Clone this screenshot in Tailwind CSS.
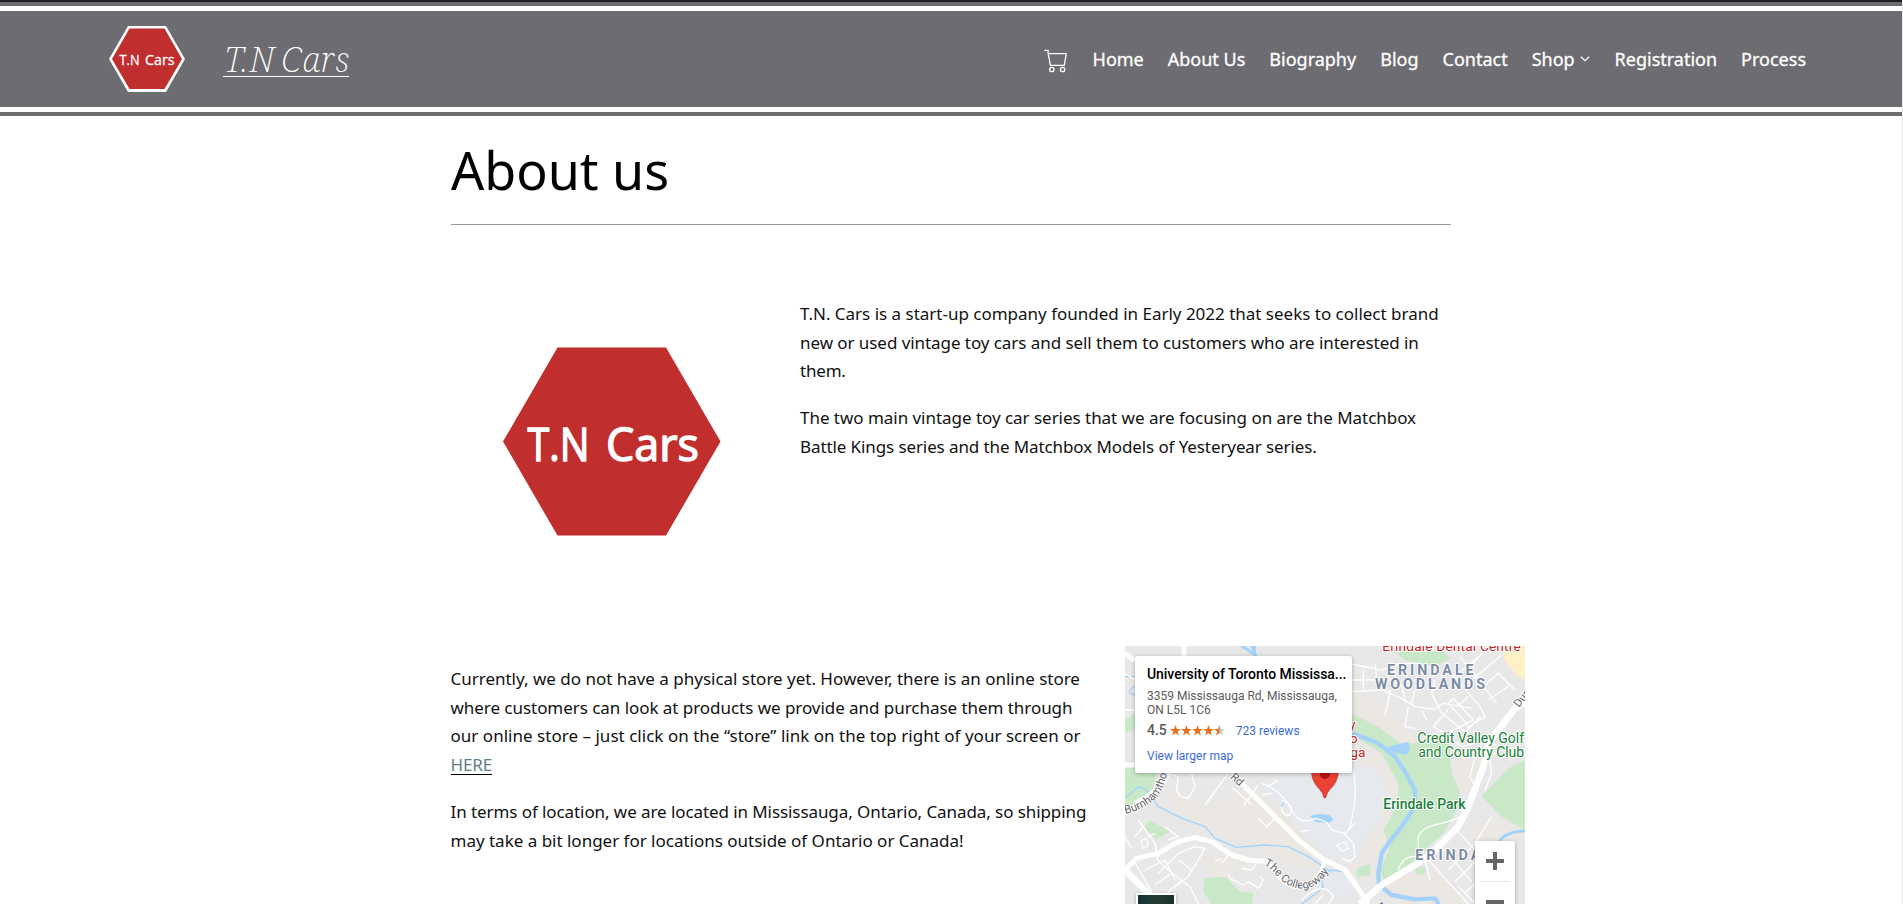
<!DOCTYPE html>
<html lang="en">
<head>
<meta charset="utf-8">
<title>About us – T.N Cars</title>
<script src="https://cdn.jsdelivr.net/npm/@tailwindcss/browser@4"></script>
</head>
<body class="h-[904px] overflow-hidden bg-white text-[#111] font-['Noto_Sans','Open_Sans',sans-serif]">
<div class="h-[904px] w-[1903px] overflow-hidden border-r border-[#e8e8e8]">
  <header class="w-full text-white">
    <div class="h-[2px] bg-[#1d2124]"></div>
    <div class="h-1 bg-[#6d6c70]"></div>
    <div class="h-[5px] bg-white"></div>
    <div class="flex h-24 items-center bg-[#6d6c70] pl-[109px] pr-24">
      <svg class="h-[66px] w-[76px] shrink-0" viewBox="0 0 76 66">
        <polygon points="0,33 19,0 57,0 76,33 57,66 19,66" fill="#fff"/>
        <polygon points="3,33 20.5,2.5 55.5,2.5 73,33 55.5,63 20.5,63" fill="#c12e2e"/>
        <g font-family="Open Sans" font-size="15" fill="#fff" stroke="#fff" stroke-width=".3">
          <text x="10.500" y="39" textLength="20" lengthAdjust="spacingAndGlyphs">T.N</text>
          <text x="36" y="39" textLength="29.500" lengthAdjust="spacingAndGlyphs">Cars</text>
        </g>
      </svg>
      <a class="ml-[38px] mt-[3px] flex h-[33px] w-[126px] items-end border-b border-white">
        <span class="whitespace-nowrap pl-[1px] text-[35px] font-extralight italic leading-[34px] tracking-[0.7px] [word-spacing:-4px] font-['Noto_Serif','Liberation_Serif',serif]">T.N Cars</span>
      </a>
      <nav class="ml-auto flex items-center gap-[24.2px] text-[18px] leading-[30px]">
        <svg class="mt-1 h-6 w-6" viewBox="0 0 24 24" fill="none" stroke="#fff" stroke-width="1.3">
          <path d="M0.5 1.4H4L4.2 4.6H22.3L20.2 16.3H6.4L4.2 4.6"/>
          <circle cx="7.8" cy="20.5" r="2.2"/><circle cx="18.6" cy="20.5" r="2.2"/>
        </svg>
        <div class="flex items-center gap-[24px] [-webkit-text-stroke:0.3px_white]">
          <a>Home</a><a>About Us</a><a>Biography</a><a>Blog</a><a>Contact</a>
          <a class="flex items-center gap-[5px] pr-px">Shop
            <svg class="h-[6px] w-[10px]" viewBox="0 0 10 6" fill="none" stroke="#fff" stroke-width="1.2"><path d="M0.8 0.8L5 4.6L9.2 0.8"/></svg>
          </a>
          <a>Registration</a><a>Process</a>
        </div>
      </nav>
    </div>
    <div class="h-[5px] bg-white"></div>
    <div class="h-1 bg-[#6d6c70]"></div>
  </header>

  <main class="ml-[451px]">
    <div class="flex h-[109px] w-[1000px] border-b border-[#98989a] pt-[17px]">
      <h1 class="text-[52px] leading-[74px] text-black">About us</h1>
    </div>

    <section class="mt-[75px] flex h-[346px]">
      <svg class="ml-[52px] mt-[47px] h-[189px] w-[218px] shrink-0" viewBox="0 0 218 189">
        <polygon points="0,94.5 54.5,0.500 163,0.500 217.500,94.5 163,188.500 54.5,188.500" fill="#c12e2e"/>
        <g font-family="Open Sans" font-size="46" fill="#fff" stroke="#fff" stroke-width="1.4" stroke-linejoin="round">
          <text x="24.500" y="114" textLength="62" lengthAdjust="spacingAndGlyphs">T.N</text>
          <text x="103" y="114" textLength="93" lengthAdjust="spacingAndGlyphs">Cars</text>
        </g>
      </svg>
      <div class="ml-[79px] whitespace-nowrap text-[17px] leading-[28.7px]">
        <p class="mb-[18px]">
          <span class="block tracking-[-0.008px]">T.N. Cars is a start-up company founded in Early 2022 that seeks to collect brand</span>
          <span class="block tracking-[-0.06px]">new or used vintage toy cars and sell them to customers who are interested in</span>
          <span class="block tracking-[-0.2px]">them.</span>
        </p>
        <p>
          <span class="block tracking-[-0.032px]">The two main vintage toy car series that we are focusing on are the Matchbox</span>
          <span class="block tracking-[-0.1px]">Battle Kings series and the Matchbox Models of Yesteryear series.</span>
        </p>
      </div>
    </section>

    <section class="flex">
      <div class="w-[674px] shrink-0 whitespace-nowrap pt-[19px] text-[17px] leading-[28.7px]">
        <p class="-ml-[0.5px] mb-[18px]">
          <span class="block tracking-[-0.01px]">Currently, we do not have a physical store yet. However, there is an online store</span>
          <span class="block tracking-[-0.046px]">where customers can look at products we provide and purchase them through</span>
          <span class="block tracking-[0.024px]">our online store – just click on the “store” link on the top right of your screen or</span>
          <a class="block h-[28.8px]"><span class="inline-block h-[24px] border-b border-black tracking-[-0.14px] text-[#5b7f86]">HERE</span></a>
        </p>
        <p class="-ml-[0.5px]">
          <span class="block tracking-[-0.08px]">In terms of location, we are located in Mississauga, Ontario, Canada, so shipping</span>
          <span class="block tracking-[-0.01px]">may take a bit longer for locations outside of Ontario or Canada!</span>
        </p>
      </div>

      <div class="relative h-[258px] w-[400px] shrink-0 overflow-hidden font-['Roboto',sans-serif]">
        <svg class="block h-[258px] w-[400px]" viewBox="30 18 1200 774">
          <rect x="30" y="18" width="1200" height="774" fill="#e8e8e8"/>
          <!-- land use -->
          <path fill="#ebe8e4" d="M130 430L270 500L420 440L560 560L640 660L560 690L470 650L330 590L200 520ZM710 130L820 200L900 300L870 380L900 440L880 520L830 590L790 690L740 740L700 650L760 560L800 430L710 400ZM1010 330L1100 360L1070 470L1030 450ZM1080 560L1230 500V620H1080ZM250 640L420 660L300 720ZM820 700L980 700L1060 792H800Z"/>
          <path fill="#e6eaee" d="M440 440L560 380H780L810 440L800 540L760 580L720 670L640 650L540 550ZM620 700L720 720L700 780L620 750Z"/>
          <path fill="#c8e8c8" d="M30 378H130L115 440L75 490L30 515ZM30 240L60 220V270L30 275ZM105 540L165 575L125 598L85 565ZM268 715L330 710L375 755L415 760L410 792H290L265 755ZM700 215L790 260L855 310L1003 308L1010 400L1035 455L1025 510L985 580L940 620L880 690L810 730L795 690L825 620L805 570L850 490L850 430L800 340L710 285ZM835 30L870 60L960 80L1005 55L985 35ZM1230 360L1180 385L1100 468L1160 530L1230 570ZM725 685L765 672L768 705L725 710ZM900 685L930 680L935 698L905 706Z"/>
          <path fill="#fdf0c4" d="M1165 18H1230V120L1205 105L1165 55Z"/>
          <!-- water -->
          <g fill="none" stroke="#a3d3fa" stroke-linecap="round" stroke-linejoin="round">
            <path stroke-width="4" d="M30 475L70 440L95 450L130 500L160 515L200 535L270 560L300 595L365 622L450 615L520 620L580 650L640 690L690 695M30 110H60M60 140Q40 145 46 160L60 165M560 792L610 755L625 740L615 710L650 690M505 490L500 500"/>
            <path stroke-width="13" d="M700 275L790 310L840 350L870 395L900 450V500L860 560L820 610L800 640L790 700L792 735L830 765L900 778L960 775L970 792"/>
            <path stroke-width="9" d="M380 18L422 45M1150 610Q1165 575 1230 572"/>
          </g>
          <path fill="#a3d3fa" d="M585 528L610 522L645 525L655 540L640 550L600 545ZM820 320L880 305L885 325L875 345L850 340L820 332ZM405 18H423V50Z"/>
          <!-- minor streets -->
          <g fill="none" stroke="#fff" stroke-width="4" stroke-linejoin="round">
            <path d="M30 210H60M30 100L60 120M160 400L190 410L185 450Q190 475 220 475L240 440L230 400M340 400L270 495M430 435L385 498M350 440L410 495M430 535L455 560L485 530M440 430Q500 450 530 510Q555 560 600 535Q640 540 650 570L690 580L720 550M460 440L490 420M470 460L440 465M500 480Q540 495 525 525Q500 530 500 500M555 575L580 570M715 390Q730 460 705 560L690 585L715 610L720 650L705 665L680 655M665 615L690 605L700 625L680 635Z"/>
            <path d="M70 540L120 610L128 660L160 690L225 740L250 792M80 600L95 595L100 615L82 625ZM100 590L120 580M60 590L85 560M30 590L50 625M150 560L190 590L160 600M55 660L130 790M90 690L150 660L180 720M130 700L190 640L240 620L270 625L220 710L180 740M120 735L170 700M150 765L200 720M190 660L230 690M300 665L320 655M320 670L345 640L400 660M380 685L410 690L430 660M340 700L345 715L385 735L400 725L430 745L445 720L435 710M500 730L520 700M560 780Q600 735 640 750L655 770L640 792M600 792L625 765"/>
            <path d="M710 72L800 90L860 70H920M745 90V150M780 70L790 150M710 155L800 150L860 175L900 200L960 208L985 190L1070 205M840 80V120H710M825 150L820 185L810 225M880 200L870 260L900 265M920 210L935 240M860 135L870 180M900 150L890 190M960 120L950 160L980 220L1055 280L1060 260L1110 230L1095 200L990 75M1000 190L1015 175L1075 240L1055 250ZM1030 195L1060 170M1035 50L1145 190M1075 70L1120 20M1030 100L1090 50M1060 130L1160 45M1100 145L1150 100L1200 150M1080 110L1120 80M1120 180L1180 140M1000 208L955 260L990 280L1060 250M1095 230L1040 290M990 280L1040 320L1075 310M1120 290Q1140 330 1170 320M1120 330L1160 350M1080 440L1065 410L1080 350M1110 450L1130 400L1125 360M850 690Q865 640 920 650L980 630M910 650V590Q920 560 980 550Q1060 530 1040 510"/>
            <path d="M970 610L1070 725M1015 560L1090 640M940 660L1060 792M1000 690L1080 610L1130 530M1020 725L1090 655M925 640L945 720M1050 760L1085 725M1030 740L1080 790"/>
          </g>
          <!-- major streets -->
          <g fill="none" stroke="#fff" stroke-linejoin="round">
            <path stroke-width="15" d="M30 40L60 62M207 18V50M30 375H60M60 490Q130 460 160 400M30 518L90 480M360 410L400 450L500 550L550 600L620 655L690 690L740 760L760 792"/>
            <path stroke-width="15" d="M30 690L65 655L130 640L190 605L240 592L290 605L350 645L400 660L450 664"/>
            <path stroke-width="13" d="M450 664Q470 672 495 715Q550 760 590 730L620 695L630 660"/>
            <path stroke-width="20" d="M30 690L110 770M735 792L800 735L940 650L1030 560L1060 500L1105 380L1120 310L1200 205L1230 185"/>
          </g>
          <path d="M585 385Q585 330 630 330Q675 330 670 400Q665 430 645 448Q635 458 632 473H627Q624 458 614 448Q592 426 590 400Z" fill="#ea4335" stroke="#c5221f" stroke-width="2"/>
          <circle cx="630" cy="402" r="15" fill="#b31412"/>
          <!-- place names -->
          <g font-family="Roboto, sans-serif" paint-order="stroke" stroke="#fff" stroke-width="6" stroke-linejoin="round">
            <g fill="#c5221f" font-size="41">
              <text x="802" y="32" textLength="415">Erindale Dental Centre</text>
              <text x="702" y="268">y</text><text x="704" y="310">o</text><text x="706" y="351">ga</text>
            </g>
            <g fill="#7b8ba5" font-size="43" font-weight="700">
              <text x="816" y="105" textLength="260">ERINDALE</text>
              <text x="780" y="147" textLength="330">WOODLANDS</text>
              <text x="901" y="660" textLength="260">ERINDALE</text>
            </g>
            <g fill="#188038" font-size="42">
              <text x="907" y="309" textLength="320">Credit Valley Golf</text>
              <text x="910" y="351" textLength="317">and Country Club</text>
              <text x="805" y="507" textLength="247" font-weight="500">Erindale Park</text>
            </g>
            <g fill="#5f6368" font-size="34" stroke-width="5">
              <path id="burn" d="M31 522Q115 500 140 448Q160 410 165 330" fill="none" stroke="none"/>
              <text><textPath href="#burn">Burnhamthorpe</textPath></text>
              <text transform="translate(344 413) rotate(42)">Rd</text>
              <path id="coll" d="M446 675C485 690 490 735 550 745C590 750 615 730 640 695" fill="none" stroke="none"/>
              <text><textPath href="#coll">The Collegeway</textPath></text>
              <text transform="translate(1212 204) rotate(-52)">Dundas</text>
              <text transform="translate(780 800) rotate(35)">Av</text>
            </g>
          </g>
        </svg>

        <div class="absolute left-[10px] top-[10px] h-[117px] w-[217px] rounded-[2px] bg-white pl-3 text-[12px] text-[#5b5b5b] shadow-[0_1px_4px_rgba(0,0,0,0.3)]">
          <p class="mt-[9px] whitespace-nowrap text-[14px] font-medium leading-[18px] tracking-[-0.05px] text-black">University of Toronto Mississa...</p>
          <p class="mt-[6px] whitespace-nowrap text-[12px] leading-[14px]">3359 Mississauga Rd, Mississauga,<br>ON L5L 1C6</p>
          <div class="mt-[5px] flex h-4 items-center whitespace-nowrap">
            <span class="text-[14px] font-medium">4.5</span>
            <svg class="ml-[3px] h-[11px] w-[55px]" viewBox="0 0 55 11">
              <defs>
                <path id="star" d="M5.5 0L6.9 3.9H11L7.700 6.4L8.9 10.4L5.5 8L2.100 10.4L3.300 6.4L0 3.9H4.100Z"/>
                <clipPath id="half"><rect width="5.500" height="11"/></clipPath>
              </defs>
              <g fill="#e7711b"><use href="#star"/><use href="#star" x="11"/><use href="#star" x="22"/><use href="#star" x="33"/></g>
              <use href="#star" x="44" fill="#c9c9c9"/>
              <g transform="translate(44 0)" clip-path="url(#half)"><use href="#star" fill="#e7711b"/></g>
            </svg>
            <span class="ml-[11px] mt-px text-[#3a6bd8]">723 reviews</span>
          </div>
          <p class="mt-[10px] leading-4 text-[#3a6bd8]">View larger map</p>
        </div>

        <div class="absolute left-[350px] top-[195px] h-20 w-10 rounded-[2px] bg-white shadow-[0_1px_4px_rgba(0,0,0,0.3)]">
          <svg class="h-20 w-10" viewBox="0 0 40 80"><path d="M11 18H18V11H22V18H29V22H22V29H18V22H11ZM11 59H29V63H11Z" fill="#666"/><rect x="5" y="40" width="30" height="1" fill="#e6e6e6"/></svg>
        </div>

        <div class="absolute left-[11px] top-[247px] h-10 w-10 border-2 border-white bg-linear-to-r from-[#123334] via-[#253c34] to-[#1b3029] shadow-[0_1px_3px_rgba(0,0,0,0.3)]"></div>
      </div>
    </section>
  </main>
</div>
</body>
</html>
